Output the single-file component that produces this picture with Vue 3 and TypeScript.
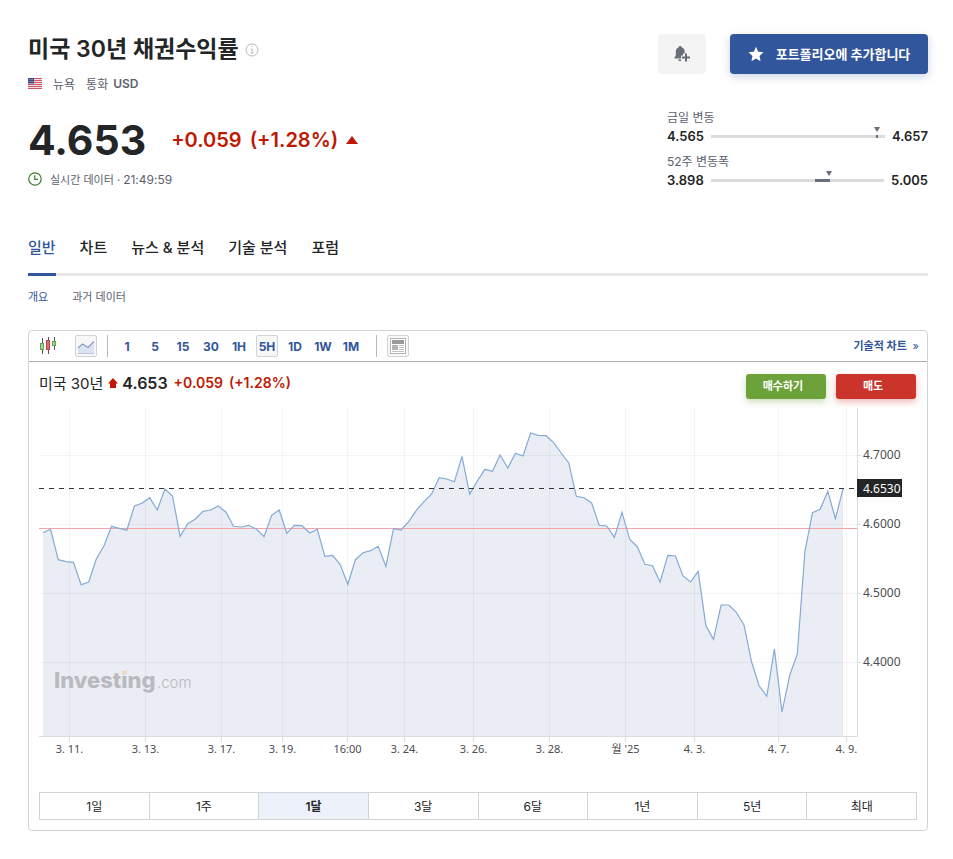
<script setup lang="ts">
interface Tick {
  at: number
  label: string
}

const tabs: string[] = ['일반', '차트', '뉴스 & 분석', '기술 분석', '포럼']
const intervals: string[] = ['1', '5', '15', '30', '1H', '5H', '1D', '1W', '1M']
const periods: string[] = ['1일', '1주', '1달', '3달', '6달', '1년', '5년', '최대']

const ranges = [
  { label: '금일 변동', low: '4.565', high: '4.657', from: 95, width: 1, marker: 95.5 },
  { label: '52주 변동폭', low: '3.898', high: '5.005', from: 60, width: 8.6, marker: 68.2 },
]

const timeTicks: Tick[] = [
  { at: 30.5, label: '3. 11.' },
  { at: 106.5, label: '3. 13.' },
  { at: 182.5, label: '3. 17.' },
  { at: 243.5, label: '3. 19.' },
  { at: 308.5, label: '16:00' },
  { at: 365.5, label: '3. 24.' },
  { at: 434.5, label: '3. 26.' },
  { at: 510.5, label: '3. 28.' },
  { at: 586.5, label: "월 '25" },
  { at: 655.5, label: '4. 3.' },
  { at: 739.5, label: '4. 7.' },
  { at: 807.5, label: '4. 9.' },
]

const priceTicks: Tick[] = [
  { at: 55.5, label: '4.7000' },
  { at: 124.5, label: '4.6000' },
  { at: 193.5, label: '4.5000' },
  { at: 262.5, label: '4.4000' },
]

// Vertical position of each sample inside the chart's view box.
const samples: number[] = [
  132.7, 129.3, 159.7, 161.7, 162.3, 184.7, 182, 159, 145.7, 126.3, 128.3, 130.3, 106, 103.3, 97.7,
  110, 89, 96, 136.3, 123.7, 119, 111.3, 110, 106, 112, 126.3, 127, 125.3, 129, 136.7, 115.3, 110,
  133.3, 125.3, 125.7, 133, 129.3, 156.3, 155.3, 164.3, 184.3, 159.7, 152.7, 150.7, 146.3, 166.3,
  128.7, 130, 121.7, 110.3, 101.7, 94, 77.7, 79, 81.7, 56.3, 94, 81, 69.3, 71.3, 55, 68, 53.3, 56,
  33, 35.3, 35.7, 42.3, 53, 62.7, 96.3, 97.7, 103, 125.3, 126, 137.3, 112.3, 139.3, 146.7, 164.3,
  165.7, 182, 155.3, 156, 176, 182, 171.3, 225.7, 239.3, 205, 205, 212.3, 225, 262, 286, 296.3, 249,
  312, 275.3, 254, 151.7, 112.7, 109.3, 91.3, 118.7, 89,
]

const firstX = 4
const stepX = 800 / (samples.length - 1)
const linePoints = samples.map((y, i) => `${(firstX + i * stepX).toFixed(1)},${y}`).join(' ')
const areaPoints = `${firstX},336 ${linePoints} ${firstX + 800},336`
</script>

<template>
  <main class="page">
    <header class="header">
      <div class="summary">
        <div class="title-row">
          <h1>미국 30년 채권수익률</h1>
          <svg class="info" viewBox="0 0 14 14" aria-hidden="true">
            <circle cx="7" cy="7" r="6" fill="none" stroke="#b5b8be" />
            <path d="M5.8 6h1.4v4M5.6 10h3M6.4 3.6h1.2" fill="none" stroke="#b5b8be" />
          </svg>
        </div>
        <div class="meta">
          <svg class="flag" viewBox="0 0 14 11" aria-hidden="true">
            <rect width="14" height="11" fill="#f6dfe2" />
            <path d="M0 .5h14M0 2.5h14M0 4.5h14M0 6.5h14M0 8.5h14M0 10.5h14" stroke="#cf5566" />
            <rect width="6" height="5.5" fill="#454f88" />
            <path d="M1 1.5h4M1 3.5h4" stroke="#a9b0d0" stroke-dasharray="1 .6" stroke-width=".7" />
          </svg>
          <span class="city">뉴욕</span>
          <span class="currency">통화</span>
          <b>USD</b>
        </div>
        <div class="quote">
          <span class="last">4.653</span>
          <span class="change">+0.059</span>
          <span class="percent">(+1.28%)</span>
          <svg class="up" viewBox="0 0 12 8" aria-hidden="true"><path d="M0 8 6 0l6 8z" fill="#c01802" /></svg>
        </div>
        <div class="clock-row">
          <svg class="clock" viewBox="0 0 14 14" aria-hidden="true">
            <circle cx="7" cy="7" r="6.2" fill="none" stroke="#3c7d2a" stroke-width="1.2" />
            <path d="M6.8 3.2v4.2H10" fill="none" stroke="#3c7d2a" stroke-width="1.2" />
          </svg>
          <span class="realtime">실시간 데이터 · <time>21:49:59</time></span>
        </div>
      </div>

      <div class="side">
        <div class="actions">
          <button class="alert" type="button" aria-label="알림 추가">
            <svg viewBox="0 0 18 18" aria-hidden="true">
              <path d="M7.2 1.1c.9 0 1.4.5 1.4 1.2 2.1.6 3.1 2.3 3.1 4.3v1.8H10v2H8.1v3H1.6v-1.2l1.2-1.5V6.6c0-2 1-3.7 3-4.3 0-.7.5-1.2 1.4-1.2z" fill="#6a6d7a" />
              <path d="M5.2 14.5h3.2c0 1-.7 1.6-1.6 1.6s-1.6-.6-1.6-1.6z" fill="#6a6d7a" />
              <path d="M13 8.5v8M9 12.5h8" stroke="#6a6d7a" stroke-width="2" />
            </svg>
          </button>
          <button class="portfolio" type="button">
            <svg viewBox="0 0 16 16" aria-hidden="true">
              <path d="m8 .8 2.2 4.9 5.3.6-4 3.6 1.1 5.3L8 12.5l-4.6 2.7 1.1-5.3-4-3.6 5.3-.6z" fill="#fff" />
            </svg>
            <span>포트폴리오에 추가합니다</span>
          </button>
        </div>
        <dl class="ranges">
          <div v-for="r in ranges" :key="r.label" class="range">
            <dt>{{ r.label }}</dt>
            <dd>
              <b>{{ r.low }}</b>
              <span class="track">
                <i class="band" :style="{ left: r.from + '%', width: r.width + '%' }"></i>
                <i class="marker" :style="{ left: r.marker + '%' }"></i>
              </span>
              <b>{{ r.high }}</b>
            </dd>
          </div>
        </dl>
      </div>
    </header>

    <nav class="tabs">
      <a v-for="(tab, i) in tabs" :key="tab" href="#" :class="{ active: i === 0 }">{{ tab }}</a>
    </nav>
    <nav class="subtabs">
      <a href="#" class="active">개요</a>
      <a href="#">과거 데이터</a>
    </nav>

    <section class="card">
      <div class="toolbar">
        <button class="tool plain" type="button" aria-label="캔들 차트">
          <svg viewBox="0 0 22 22" aria-hidden="true">
            <path d="M5.5 3v16M11.500 2v17M17.500 2v13" stroke="#555" />
            <rect x="3.5" y="8.5" width="3" height="6" fill="#a5d391" stroke="#64a04f" />
            <rect x="9.5" y="5.5" width="3" height="9" fill="#e0676b" stroke="#b9474c" />
            <rect x="15.5" y="6.5" width="3" height="4" fill="#a5d391" stroke="#64a04f" />
          </svg>
        </button>
        <button class="tool boxed" type="button" aria-label="영역 차트">
          <svg viewBox="0 0 20 20" aria-hidden="true">
            <path d="m2 13 5-4 5 3.5 6-6V18H2z" fill="#dbe3f3" />
            <path d="m2 12 4.5-4 5.5 3.5 6-6" fill="none" stroke="#8398c0" stroke-width="1.2" />
            <path d="M2 17.5h16" stroke="#b9c6e2" />
          </svg>
        </button>
        <div class="intervals">
          <button v-for="t in intervals" :key="t" type="button" :class="{ active: t === '5H' }">{{ t }}</button>
        </div>
        <button class="tool boxed" type="button" aria-label="뉴스">
          <svg viewBox="0 0 20 20" aria-hidden="true">
            <rect x="2.5" y="2.5" width="15" height="15" fill="#fff" stroke="#b5b5b5" />
            <rect x="4" y="4" width="12" height="4" fill="#999" />
            <rect x="4" y="9" width="6" height="5" fill="#b4b4b4" />
            <path d="M11 9.500h5M11 11.500h5M11 13.500h5M4 15.500h12" stroke="#c2c2c2" />
          </svg>
        </button>
        <a class="technical" href="#">기술적 차트 <span>»</span></a>
      </div>

      <div class="body">
        <div class="info-row">
          <div class="instrument">
            <span class="name">미국 30년</span>
            <svg viewBox="0 0 10 10" aria-hidden="true"><path d="m5 0 5 5.5H8V10H2V5.5H0z" fill="#c01802" /></svg>
            <b class="price">4.653</b>
            <b class="delta">+0.059</b>
            <b class="delta">(+1.28%)</b>
          </div>
          <div class="trade">
            <button class="buy" type="button">매수하기</button>
            <button class="sell" type="button">매도</button>
          </div>
        </div>

        <svg class="chart" viewBox="0 0 878 384" role="img" aria-label="미국 30년 채권수익률">
          <polygon :points="areaPoints" class="area" />
          <g class="grid">
            <path v-for="t in timeTicks" :key="t.at" :d="`M${t.at} 8V336`" />
            <path v-for="t in priceTicks" :key="t.at" :d="`M0 ${t.at}H818`" />
          </g>
          <g class="watermark">
            <text x="15" y="288" class="brand">Investing</text>
            <text x="118" y="288" class="domain">.com</text>
            <path d="m83 272 5-2-1 4h-4z" class="spark" />
          </g>
          <path d="M0 128.5H818" class="previous" />
          <polyline :points="linePoints" class="line" />
          <path d="M0 88.5H818" class="current" />
          <path d="M0 336.5H818.5V8" class="axis" />
          <path v-for="t in timeTicks" :key="t.at" :d="`M${t.at} 337v5`" class="axis" />
          <path v-for="t in priceTicks" :key="t.at" :d="`M819 ${t.at}h3`" class="axis" />
          <text v-for="t in timeTicks" :key="t.at" :x="t.at" y="353" class="time">{{ t.label }}</text>
          <text v-for="t in priceTicks" :key="t.at" x="824" :y="t.at + 3" class="value">{{ t.label }}</text>
          <rect x="818" y="79" width="45" height="18" fill="#232526" />
          <text x="824" y="93" class="value badge">4.6530</text>
        </svg>

        <div class="periods">
          <button v-for="p in periods" :key="p" type="button" :class="{ active: p === '1달' }">{{ p }}</button>
        </div>
      </div>
    </section>
  </main>
</template>

<style>
body {
  background: #fff;
}
</style>

<style scoped>
.page {
  padding: 34px 25px 28px 28px;
  color: #232526;
  font-family: Inter, 'Noto Sans CJK KR', sans-serif;
  font-size: 12px;
}
.page * {
  box-sizing: border-box;
}
button {
  padding: 0;
  border: 0;
  background: none;
  color: inherit;
  font: inherit;
  cursor: pointer;
}
a {
  color: inherit;
  text-decoration: none;
}
svg {
  display: block;
  flex: none;
}
.header {
  display: flex;
  justify-content: space-between;
}
.title-row {
  display: flex;
  align-items: center;
  gap: 6px;
  height: 32px;
}
h1 {
  margin: 0;
  padding-bottom: 2px;
  font-size: 23px;
  font-weight: 600;
  line-height: 30px;
}
.info {
  width: 14px;
  height: 14px;
}
.meta {
  display: flex;
  align-items: center;
  height: 20px;
  margin-top: 7px;
  color: #5b616e;
}
.flag {
  width: 14px;
  height: 11px;
  margin-right: 11px;
}
.city {
  margin-right: 11px;
}
.currency {
  margin-right: 5px;
}
.meta b {
  font-weight: 600;
}
.quote {
  display: flex;
  align-items: center;
  height: 48px;
  margin-top: 23px;
}
.last {
  margin-right: 25px;
  font-size: 41px;
  font-weight: 700;
  line-height: 48px;
}
.change,
.percent {
  margin-right: 8px;
  color: #c01802;
  font-size: 20px;
  font-weight: 600;
}
.up {
  width: 12px;
  height: 8px;
}
.clock-row {
  display: flex;
  align-items: center;
  gap: 8px;
  height: 20px;
  margin-top: 5px;
  color: #5b616e;
}
.clock {
  width: 14px;
  height: 14px;
}
.realtime {
  font-size: 11px;
}
.realtime time {
  font-size: 12px;
}
.side {
  width: 270px;
}
.actions {
  display: flex;
  gap: 24px;
}
.alert,
.portfolio {
  display: flex;
  align-items: center;
  justify-content: center;
  height: 40px;
  border-radius: 4px;
}
.alert {
  width: 48px;
  background: #f4f4f5;
}
.alert svg {
  width: 18px;
  height: 18px;
}
.portfolio {
  flex: 1;
  gap: 12px;
  background: #32569b;
  box-shadow: 0 3px 8px rgba(50, 86, 155, 0.25);
  color: #fff;
  font-size: 13px;
  font-weight: 700;
  white-space: nowrap;
}
.portfolio span {
  padding-bottom: 2px;
}
.portfolio svg {
  width: 16px;
  height: 16px;
}
.ranges {
  display: grid;
  gap: 8px;
  margin: 35px 0 0 9px;
  line-height: 18px;
}
.ranges dt {
  color: #5b616e;
}
.ranges dd {
  display: flex;
  align-items: center;
  gap: 7px;
  margin: 0;
  font-size: 13px;
}
.ranges b {
  font-weight: 600;
}
.track {
  position: relative;
  flex: 1;
  height: 3px;
  background: #dcdcdf;
}
.band {
  position: absolute;
  top: 0;
  height: 3px;
  background: #6a6d7a;
}
.marker {
  position: absolute;
  top: -8px;
  margin-left: -3px;
  border: 3px solid transparent;
  border-top: 5px solid #6a6d7a;
  border-bottom: 0;
}
.tabs {
  display: flex;
  gap: 24px;
  margin-top: 43px;
  box-shadow: inset 0 -3px #e6e7e8;
  font-size: 15px;
  font-weight: 500;
  line-height: 32px;
}
.tabs a {
  padding-bottom: 12px;
}
.tabs .active {
  box-shadow: inset 0 -3px #32569b;
  color: #32569b;
}
.subtabs {
  display: flex;
  gap: 24px;
  margin-top: 12px;
  color: #5b616e;
  font-size: 11px;
  line-height: 18px;
}
.subtabs .active {
  color: #32569b;
}
.card {
  margin-top: 24px;
  border: 1px solid #d2d5d8;
  border-radius: 4px;
}
.toolbar {
  display: flex;
  align-items: center;
  height: 31px;
  padding: 0 8px;
  border-bottom: 1px solid #aaacae;
}
.tool {
  width: 22px;
  height: 22px;
}
.tool svg {
  width: 100%;
  height: 100%;
}
.plain {
  margin-right: 16px;
}
.boxed,
.intervals .active {
  border: 1px solid #d0d3d8;
  border-radius: 2px;
  background: #f7f7f8;
}
.intervals {
  display: flex;
  gap: 6px;
  margin: 0 10px;
  padding: 0 14px 0 8px;
  border: solid #b5b8bc;
  border-width: 0 1px;
  color: #32569b;
  font-weight: 700;
  white-space: nowrap;
}
.intervals button {
  display: flex;
  align-items: center;
  justify-content: center;
  width: 22px;
  height: 22px;
}
.technical {
  margin-left: auto;
  padding-bottom: 2px;
  color: #32569b;
  font-size: 11px;
  font-weight: 600;
}
.technical span {
  margin-left: 3px;
  font-weight: 400;
}
.body {
  padding: 12px 10px 10px;
}
.info-row {
  display: flex;
  justify-content: space-between;
  height: 26px;
}
.instrument {
  display: flex;
  align-items: center;
  height: 17px;
}
.name {
  margin-right: 5px;
  font-size: 15px;
}
.instrument svg {
  width: 10px;
  height: 10px;
  margin-right: 4px;
}
.price {
  font-size: 16px;
  font-weight: 600;
}
.delta {
  margin-left: 6px;
  color: #c01802;
  font-size: 14px;
  font-weight: 600;
}
.trade {
  display: flex;
  gap: 10px;
  padding-right: 1px;
}
.trade button {
  width: 80px;
  height: 25px;
  padding: 0 6px 4px 0;
  border-radius: 3px;
  color: #fff;
  font-size: 11px;
  font-weight: 700;
}
.trade .buy {
  background: #6da23b;
  box-shadow: 0 3px 7px rgba(109, 162, 59, 0.35);
}
.trade .sell {
  background: #ca342a;
  box-shadow: 0 3px 7px rgba(202, 52, 42, 0.35);
}
.chart {
  width: 100%;
  height: auto;
  margin-bottom: 8px;
}
.area {
  fill: #eaedf4;
}
.grid {
  fill: none;
  stroke: rgba(30, 40, 60, 0.05);
}
.line {
  fill: none;
  stroke: #84aad6;
  stroke-width: 1.2;
}
.previous {
  stroke: #f3a4a8;
}
.current {
  stroke: #333;
  stroke-dasharray: 5 5;
}
.axis {
  fill: none;
  stroke: #d9dee3;
}
.time,
.value {
  fill: #4b4d50;
  font-family: 'Noto Sans', 'Noto Sans CJK KR', sans-serif;
}
.time {
  font-size: 11px;
  text-anchor: middle;
}
.value {
  font-size: 12px;
}
.value.badge {
  fill: #fff;
}
.watermark {
  fill: #b8babf;
}
.brand {
  font-size: 22px;
  font-weight: 800;
}
.domain {
  font-size: 15px;
  font-weight: 300;
}
.spark {
  fill: #f2d9b8;
}
.periods {
  display: grid;
  grid-template-columns: repeat(8, 1fr);
  border: solid #d2d5d8;
  border-width: 1px 0 1px 1px;
}
.periods button {
  height: 26px;
  padding-bottom: 2px;
  border-right: 1px solid #d2d5d8;
}
.periods .active {
  background: #edf2fa;
  font-weight: 600;
}
</style>
